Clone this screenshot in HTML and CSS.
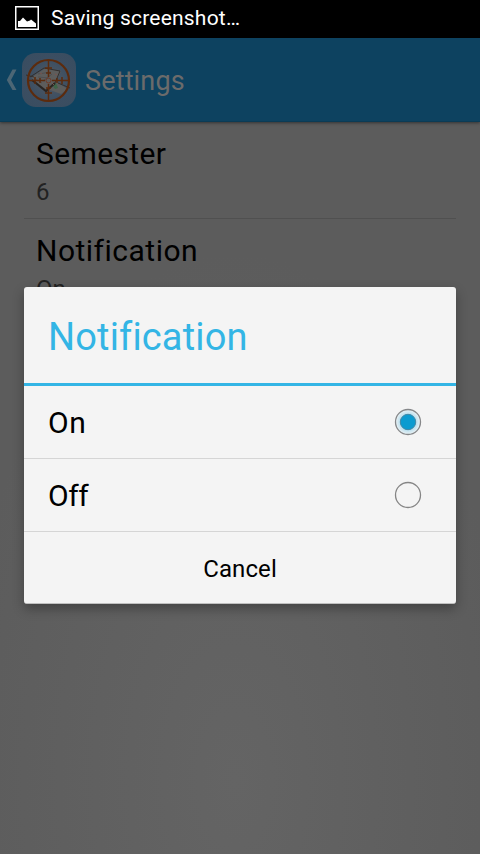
FILE: index.html
```html
<!DOCTYPE html>
<html lang="en">
<head>
<meta charset="utf-8">
<title>Settings</title>
<link rel="stylesheet" href="styles.css">
</head>
<body>
<div class="screen">
  <div class="status">
    <svg class="status-icon" width="24" height="24" viewBox="0 0 24 24"><rect x=".75" y=".75" width="22.5" height="22.5" fill="none" stroke="#fff" stroke-width="1.5"/><path fill="#fff" d="M3 21v-6h2l3-3.500 4 4 3-1 1-1 5 4v3.500z"/></svg>
    <span class="status-text">Saving screenshot…</span>
  </div>
  <header class="bar">
    <svg class="back" width="12" height="22" viewBox="0 0 12 22"><path d="M6.500.5H10.500L5 11l5.500 10H6.500L.8 11z" fill="#4c6675"/></svg>
    <svg class="app-icon" width="54" height="54" viewBox="0 0 54 54">
      <defs><radialGradient id="sky" cx=".5" cy=".5" r=".72"><stop offset="0" stop-color="#535960"/><stop offset=".55" stop-color="#3b4e62"/><stop offset=".82" stop-color="#3a4d60"/><stop offset="1" stop-color="#65686b"/></radialGradient></defs>
      <rect width="54" height="54" rx="14" fill="url(#sky)"/>
      <path d="M10 24 24 15l15 3-5 11 12 7-7 5-11-4-4 2-12-9z" fill="#5d5d5c"/>
      <path d="m31 33 3-3 2 5-3 1z" fill="#3f6548"/>
      <path d="m10 27 14 11 9-8" fill="none" stroke="#292522" stroke-width="2.200"/>
      <path d="m33 30 5-12M4 22l8 2m10-9 16 3M8 24l14-9m14 15 12 5" fill="none" stroke="#332f2d" stroke-width="1"/>
      <path d="m16 21 13-2m-13 5 11 1m-6 3 9-7M12 25l8 5" stroke="#4a4a4c" stroke-width=".8"/>
      <path d="m33 21 2 1m-17-2 2 1m10 9 2 2" stroke="#77544e"/>
      <circle cx="26.500" cy="27.500" r="20.500" fill="none" stroke="#5c2b0d" stroke-width="2.200"/>
      <path d="M26.500 7v17m0 7v17M6 27.500h17m7 0h17M23 15h7m-6 5h5m-5 15h5m-6 5h7M13 24v7m5-6v5m17-5v5m5-6v7" fill="none" stroke="#5c2b0d" stroke-width="1.500"/>
      <circle cx="26.500" cy="27.500" r="2.500" fill="none" stroke="#703b27"/>
    </svg>
    <h1 class="bar-title">Settings</h1>
  </header>
  <main class="prefs">
    <section class="pref"><div class="pref-title">Semester</div><div class="pref-value">6</div></section>
    <section class="pref"><div class="pref-title wide">Notification</div><div class="pref-value">On</div></section>
  </main>
  <div class="dialog" role="dialog">
    <h2 class="dialog-title">Notification</h2>
    <div class="choice"><span class="on">On</span>
      <svg width="28" height="28" viewBox="0 0 28 28"><defs><radialGradient id="glow"><stop offset=".6" stop-color="#b4dced"/><stop offset="1" stop-color="#edf3f5"/></radialGradient></defs><circle cx="14" cy="14" r="12.500" fill="url(#glow)" stroke="#858789" stroke-width="1.300"/><circle cx="14" cy="14" r="7.700" fill="#0b9bd0" stroke="#4388a5" stroke-width="1"/></svg>
    </div>
    <div class="choice"><span class="off">Off</span>
      <svg width="28" height="28" viewBox="0 0 28 28"><circle cx="14" cy="14" r="12.500" fill="none" stroke="#858585" stroke-width="1.300"/></svg>
    </div>
    <div class="cancel">Cancel</div>
  </div>
</div>
</body>
</html>
```
FILE: styles.css
```css
* { box-sizing: border-box; }
body { margin: 0; font-family: Roboto, "Liberation Sans", sans-serif; font-variant-ligatures: none; }
h1, h2 { margin: 0; font-weight: 400; }
svg { display: block; flex: none; }
.screen {
  position: relative;
  width: 480px;
  height: 854px;
  overflow: hidden;
  background: radial-gradient(ellipse 330px 620px at 235px 780px, #646464, #5c5c5c 85%);
}
.status { display: flex; align-items: center; height: 38px; padding: 0 0 2px 15px; background: #000; color: #fff; }
.status-text { margin-left: 12px; font-size: 21px; letter-spacing: .2px; line-height: 36px; }
.bar {
  display: flex;
  align-items: center;
  height: 84px;
  padding-left: 6px;
  background: #0d4260;
  border-bottom: 1px solid #0b3b55;
  box-shadow: 0 1px 3px rgba(0, 0, 0, .45);
}
.app-icon { margin-left: 4px; }
.bar-title { margin-left: 9px; padding-top: 2px; color: #6b6b6b; font-size: 27px; letter-spacing: .15px; line-height: 36px; }
.prefs { padding: 0 24px; }
.pref { height: 97px; padding: 14px 12px 0; border-bottom: 1px solid #505050; }
.pref:last-child { border: 0; }
.pref-title { font-size: 30px; letter-spacing: .38px; line-height: 36px; color: #000; }
.pref-title.wide { letter-spacing: .5px; }
.pref-value { margin-top: 5px; font-size: 24px; line-height: 30px; color: #222; }
.dialog {
  position: absolute;
  left: 24px;
  top: 287px;
  width: 432px;
  height: 317px;
  border-radius: 3px;
  background: #f4f4f4;
  border-bottom: 1px solid #c0c0c0;
  box-shadow: 0 5px 12px rgba(0, 0, 0, .3);
}
.dialog-title { height: 99px; padding: 1px 0 0 24px; border-bottom: 3px solid #33b5e5; color: #33b5e5; font-size: 38px; letter-spacing: .15px; line-height: 99px; }
.choice { display: flex; align-items: center; justify-content: space-between; height: 73px; padding: 0 34px 0 24px; border-bottom: 1px solid #d5d5d5; font-size: 30px; color: #000; }
.on { letter-spacing: .5px; }
.off { letter-spacing: -.4px; }
.cancel { height: 71px; padding-top: 1px; text-align: center; font-size: 24px; letter-spacing: .1px; line-height: 73px; color: #000; }
```
